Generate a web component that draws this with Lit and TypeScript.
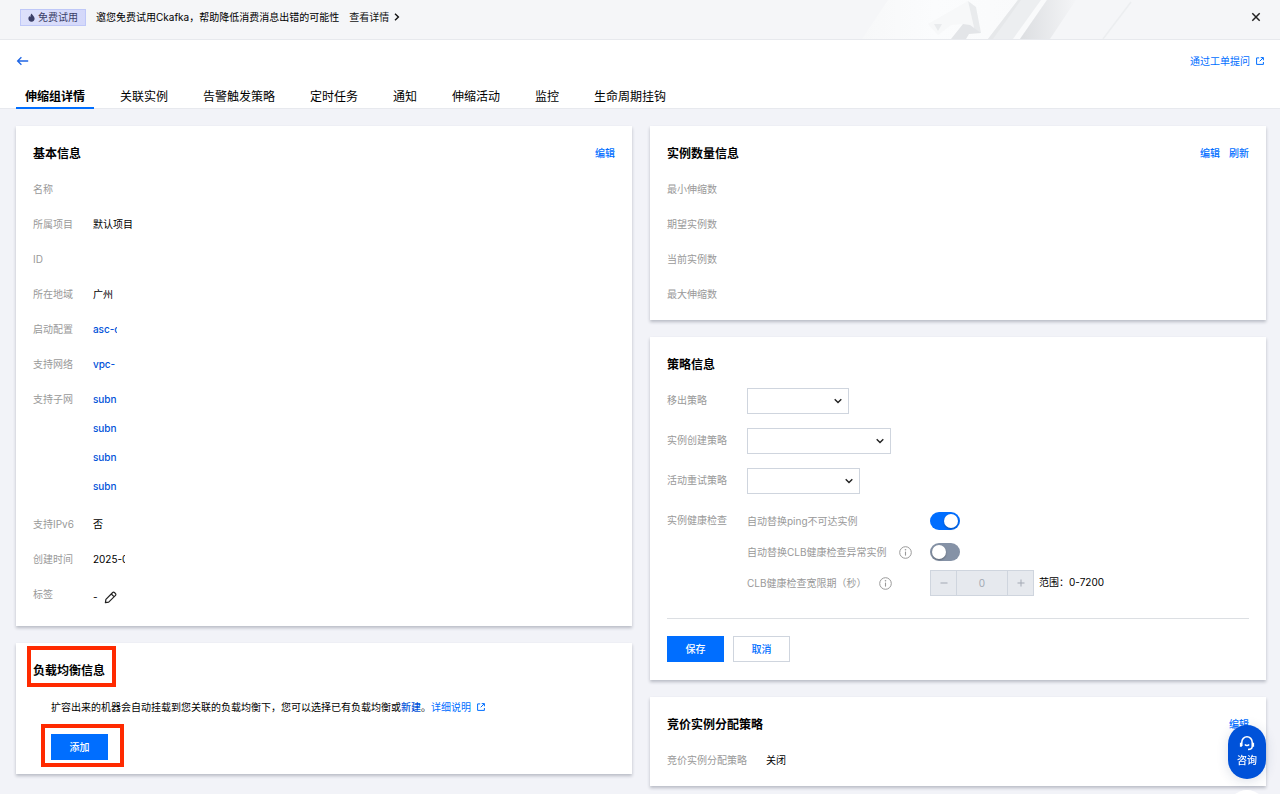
import { LitElement, html, css, svg } from "lit";
import { customElement, property, state } from "lit/decorators.js";

const externalIcon = html`<svg class="ext" viewBox="0 0 8 8" aria-hidden="true">
  <path d="M3.2 .9H.6v6.5h6.8V5M4.7 .6h2.7v2.7M7.2 .8L3.7 4.3" fill="none" stroke="currentColor" stroke-width="1"/>
</svg>`;

const infoIcon = html`<svg class="info" viewBox="0 0 13 13" aria-hidden="true">
  <circle cx="6.5" cy="6.5" r="5.8" fill="none" stroke="currentColor" stroke-width="1"/>
  <path d="M6.5 5.6v4" stroke="currentColor" stroke-width="1.1"/>
  <circle cx="6.5" cy="3.8" r=".8" fill="currentColor"/>
</svg>`;

const base = css`
  * { box-sizing: border-box; }
  button, input, select { font: inherit; margin: 0; }
  button { cursor: pointer; }
  a { color: #006eff; text-decoration: none; }
  .ext { width: 8px; height: 8px; }
`;

@customElement("info-card")
class InfoCard extends LitElement {
  @property() heading = "";
  @property({ type: Boolean }) marked = false;

  static styles = [base, css`
    :host {
      display: block;
      background: #fff;
      padding: 18px 17px 17px;
      box-shadow: 0 2px 3px rgba(54, 58, 80, .3);
    }
    .head { display: flex; justify-content: space-between; align-items: flex-start; margin-bottom: 16px; }
    h2 { position: relative; margin: 0; font-size: 12px; font-weight: 700; line-height: 20px; }
    .mark { position: absolute; inset: -15px -11px -6px -6px; border: 4px solid #ff2a00; }
  `];

  render() {
    return html`
      <div class="head">
        <h2>${this.heading}${this.marked ? html`<span class="mark"></span>` : ""}</h2>
        <slot name="actions"></slot>
      </div>
      <slot></slot>`;
  }
}

@customElement("app-root")
class AppRoot extends LitElement {
  @state() private activeTab = 0;

  private tabs = ["伸缩组详情", "关联实例", "告警触发策略", "定时任务", "通知", "伸缩活动", "监控", "生命周期挂钩"];
  private subnets = ["subn", "subn", "subn", "subn"];
  private counts = ["最小伸缩数", "期望实例数", "当前实例数", "最大伸缩数"];
  private policies = [
    { id: "remove", label: "移出策略", size: "small" },
    { id: "create", label: "实例创建策略", size: "large" },
    { id: "retry", label: "活动重试策略", size: "medium" },
  ];

  static styles = [base, css`
    :host {
      display: block;
      min-height: 100vh;
      background: #f2f3f8;
      color: #000;
      font-family: Inter, "Noto Sans CJK SC", sans-serif;
      font-size: 10px;
      line-height: 18px;
    }

    .banner {
      position: relative;
      display: flex;
      align-items: center;
      height: 40px;
      padding: 0 19px 5px 20px;
      background: #f5f6f8;
      border-bottom: 1px solid #e7e9ed;
    }
    .banner-art { position: absolute; right: 140px; top: 0; width: 280px; height: 39px; }
    .tag {
      display: flex;
      align-items: center;
      gap: 3px;
      height: 17px;
      padding: 0 7px;
      margin-right: 10px;
      background: linear-gradient(90deg, #dde1fb, #d4d8fa);
      border: 1px solid #bfc8f8;
      color: #3c4068;
    }
    .tag svg { width: 7px; height: 9px; }
    .banner a { display: flex; align-items: center; gap: 5px; margin-left: 10px; color: #111; }
    .banner a svg { width: 6px; height: 8px; }
    .close { margin-left: auto; display: flex; padding: 0; border: 0; background: none; z-index: 1; }
    .close svg { width: 10px; height: 10px; }

    .header { background: #fff; padding: 12px 16px 0; border-bottom: 1px solid #e7e9ee; }
    .header-top { display: flex; justify-content: space-between; align-items: center; }
    .back { display: flex; padding: 0; border: 0; background: none; color: #1f66e5; }
    .back svg { width: 13px; height: 10px; }
    .header-top a, .ext-link { display: inline-flex; align-items: center; gap: 6px; }
    .tabs { display: flex; gap: 17px; margin: 16px 0 -1px; }
    .tab {
      padding: 0 9px;
      border: 0;
      border-bottom: 2px solid transparent;
      background: none;
      color: #000;
      font-size: 12px;
      line-height: 21px;
    }
    .tab.active { font-weight: 700; border-color: #006eff; }

    .content {
      display: grid;
      grid-template-columns: 1fr 1fr;
      gap: 18px;
      align-items: start;
      padding: 17px 14px 8px 16px;
    }
    .column { display: flex; flex-direction: column; gap: 17px; }
    .actions { display: flex; gap: 9px; font-weight: 500; }

    .list { display: grid; grid-template-columns: auto 1fr; gap: 17px 19px; margin: 0; }
    .list dt { color: #999; }
    .list dd { margin: 0; }
    .list a { font-weight: 500; color: #0052d9; }
    .clip { display: block; overflow: hidden; white-space: nowrap; width: 24px; }
    .clip.date { width: 32px; }
    .subnets { display: flex; flex-direction: column; gap: 11px; padding-bottom: 3px; }
    .list .tags { display: flex; align-items: center; gap: 6px; height: 24px; }
    .edit { display: flex; padding: 0; border: 0; background: none; color: #222; }
    .edit svg { width: 13px; height: 13px; }

    .balance { padding-bottom: 14px; }
    .desc { margin: 0 0 17px; padding: 0 18px; line-height: 20px; }
    .desc .new { color: #0052d9; font-weight: 500; }
    .add { position: relative; display: inline-flex; margin-left: 18px; vertical-align: top; }
    .add .mark { position: absolute; inset: -10px -16px -7px -10px; border: 4px solid #ff2a00; pointer-events: none; }

    .btn {
      width: 57px;
      height: 26px;
      padding: 0;
      border: 1px solid #006eff;
      background: #006eff;
      color: #fff;
      font-weight: 500;
    }
    .btn.plain { border-color: #cfd5de; background: #fff; color: #006eff; }

    .policy { padding-bottom: 18px; }
    .form { display: flex; flex-direction: column; gap: 14px; margin-top: -3px; }
    .field { display: grid; grid-template-columns: 62px 1fr; gap: 18px; line-height: 25px; color: #999; white-space: nowrap; }
    .select { position: relative; display: flex; }
    .select.small { width: 102px; }
    .select.medium { width: 113px; }
    .select.large { width: 144px; }
    .select select {
      width: 100%;
      height: 26px;
      appearance: none;
      border: 1px solid #cfd5de;
      border-radius: 0;
      background: #fff;
    }
    .select svg { position: absolute; right: 7px; top: 9px; width: 8px; height: 8px; pointer-events: none; }
    .checks { display: grid; grid-template-columns: 165px 1fr; grid-auto-rows: 26px; gap: 5px 18px; align-items: center; }
    .check-label { display: flex; align-items: center; gap: 12px; }
    .info { width: 13px; height: 13px; flex: none; }
    .switch {
      appearance: none;
      display: block;
      width: 30px;
      height: 18px;
      padding: 2px;
      border-radius: 9px;
      background: #8592a6;
    }
    .switch::before {
      content: "";
      display: block;
      width: 14px;
      height: 14px;
      border-radius: 50%;
      background: #fff;
      box-shadow: 0 1px 2px rgba(0, 0, 0, .3);
    }
    .switch:checked { background: #006eff; }
    .switch:checked::before { margin-left: auto; }
    .stepper-row { display: flex; gap: 5px; color: #000; }
    .stepper { display: flex; width: 104px; height: 26px; border: 1px solid #cfd5de; background: #e6e9ee; }
    .stepper button { width: 25px; padding: 0; border: 0; background: none; display: grid; place-items: center; color: #a3a9b4; }
    .stepper button svg { width: 8px; height: 8px; }
    .stepper input {
      flex: 1;
      min-width: 0;
      padding: 0;
      border: 0;
      border-left: 1px solid #cfd5de;
      border-right: 1px solid #cfd5de;
      border-radius: 0;
      background: none;
      color: #a3a9b4;
      text-align: center;
    }
    .rule { margin: 22px 0 17px; border: 0; border-top: 1px solid #dcdfe3; }
    .buttons { display: flex; gap: 9px; }

    .consult {
      position: fixed;
      right: 14px;
      bottom: 15px;
      display: flex;
      flex-direction: column;
      align-items: center;
      width: 38px;
      height: 54px;
      padding: 10px 0 0;
      border: 0;
      border-radius: 19px;
      background: #0052d9;
      color: #fff;
      font-weight: 500;
      line-height: 18px;
      box-shadow: 0 2px 12px rgba(40, 60, 110, .16);
    }
    .consult svg { width: 16px; height: 16px; }
    .more {
      position: fixed;
      right: 14px;
      bottom: -34px;
      width: 38px;
      height: 38px;
      padding: 0;
      border: 0;
      border-radius: 50%;
      background: #fff;
    }
  `];

  private renderBanner() {
    return html`
      <div class="banner">
        <svg class="banner-art" viewBox="0 0 280 39" preserveAspectRatio="none" aria-hidden="true">
          <defs>
            <linearGradient id="fade" x1="0" x2="1"><stop offset="0" stop-color="#f7f8f9"/><stop offset=".4" stop-color="#fbfcfd"/><stop offset="1" stop-color="#f9fafb"/></linearGradient>
            <linearGradient id="shade" x1="0" x2="1"><stop offset="0" stop-color="#dcdee1"/><stop offset="1" stop-color="#f4f5f7"/></linearGradient>
          </defs>
          <path d="M2 39L28 0H182L158 39Z" fill="url(#fade)"/>
          <path d="M68 24L108 1 115 32 104 24 91 25 78 35Z" fill="#f7f8f9"/>
          <path d="M108 1L116 7 121 33 115 32Z" fill="#e9ebed"/>
          <path d="M74 24L82 24 78 31Z" fill="#e9ebed"/>
          <path d="M91 39L103 24 110 25 121 33 109 34 106 39Z" fill="#e3e5e8"/>
          <path d="M128 39L158 0H187L160 39Z" fill="#eceef0"/>
          <path d="M128 39L158 0H161L133 39Z" fill="#e6e8ea"/>
          <path d="M153 39L181 0H187L160 39Z" fill="#f9fafb"/>
          <path d="M160 39L187 0H216L190 39Z" fill="url(#shade)"/>
          <path d="M243 39L271 2" stroke="#eceef0" stroke-width="1.5"/>
        </svg>
        <span class="tag">
          <svg viewBox="0 0 7 9" aria-hidden="true"><path d="M3.6 .5C4 2 6.6 3.3 6.6 5.6A3.1 3.1 0 0 1 .4 5.6C.4 4.3 1 3.6 1.5 3 1.8 3.6 2 3.8 2.4 3.9 2.3 2.5 2.8 1.2 3.6 .5Z" fill="currentColor"/></svg>
          免费试用
        </span>
        <span>邀您免费试用Ckafka，帮助降低消费消息出错的可能性</span>
        <a href="#">查看详情
          <svg viewBox="0 0 6 8" aria-hidden="true"><path d="M1 .8L4.4 4 1 7.2" fill="none" stroke="currentColor" stroke-width="1.4"/></svg>
        </a>
        <button class="close" aria-label="关闭">
          <svg viewBox="0 0 10 10"><path d="M1.3 1.3l7.4 7.4M8.7 1.3L1.3 8.7" stroke="#222" stroke-width="1.5"/></svg>
        </button>
      </div>`;
  }

  private renderHeader() {
    return html`
      <header class="header">
        <div class="header-top">
          <button class="back" aria-label="返回">
            <svg viewBox="0 0 13 10"><path d="M12.2 5H1.6M5.4 1.2L1.6 5l3.8 3.8" fill="none" stroke="currentColor" stroke-width="1.3"/></svg>
          </button>
          <a href="#">通过工单提问 ${externalIcon}</a>
        </div>
        <nav class="tabs" role="tablist">
          ${this.tabs.map((t, i) => html`
            <button role="tab" aria-selected=${i === this.activeTab}
              class="tab ${i === this.activeTab ? "active" : ""}"
              @click=${() => (this.activeTab = i)}>${t}</button>`)}
        </nav>
      </header>`;
  }

  private renderStepIcon(plus: boolean) {
    return html`<svg viewBox="0 0 8 8" aria-hidden="true">
      <path d="M.5 4h7" stroke="currentColor"/>${plus ? svg`<path d="M4 .5v7" stroke="currentColor"/>` : ""}
    </svg>`;
  }

  render() {
    return html`
      ${this.renderBanner()}
      ${this.renderHeader()}
      <main class="content">
        <div class="column">
          <info-card heading="基本信息">
            <div class="actions" slot="actions"><a href="#">编辑</a></div>
            <dl class="list">
              <dt>名称</dt><dd></dd>
              <dt>所属项目</dt><dd>默认项目</dd>
              <dt>ID</dt><dd></dd>
              <dt>所在地域</dt><dd>广州</dd>
              <dt>启动配置</dt><dd><a class="clip" href="#">asc-c</a></dd>
              <dt>支持网络</dt><dd><a class="clip" href="#">vpc-</a></dd>
              <dt>支持子网</dt><dd class="subnets">${this.subnets.map((s) => html`<a class="clip" href="#">${s}</a>`)}</dd>
              <dt>支持IPv6</dt><dd>否</dd>
              <dt>创建时间</dt><dd><span class="clip date">2025-0</span></dd>
              <dt>标签</dt>
              <dd class="tags">-
                <button class="edit" aria-label="编辑标签">
                  <svg viewBox="0 0 13 13"><path d="M1.4 11.6l.5-3.3 6.8-6.8a1.2 1.2 0 0 1 1.7 0l1.1 1.1a1.2 1.2 0 0 1 0 1.7l-6.8 6.8zM7.3 3l2.7 2.7" fill="none" stroke="currentColor" stroke-width="1.2" stroke-linejoin="round"/></svg>
                </button>
              </dd>
            </dl>
          </info-card>

          <info-card class="balance" heading="负载均衡信息" marked>
            <p class="desc">扩容出来的机器会自动挂载到您关联的负载均衡下，您可以选择已有负载均衡或<a class="new" href="#">新建</a>。<a class="ext-link" href="#">详细说明 ${externalIcon}</a></p>
            <div class="add"><button class="btn">添加</button><span class="mark"></span></div>
          </info-card>
        </div>

        <div class="column">
          <info-card heading="实例数量信息">
            <div class="actions" slot="actions"><a href="#">编辑</a><a href="#">刷新</a></div>
            <dl class="list">${this.counts.map((c) => html`<dt>${c}</dt><dd></dd>`)}</dl>
          </info-card>

          <info-card class="policy" heading="策略信息">
            <div class="form">
              ${this.policies.map((p) => html`
                <div class="field">
                  <label for=${p.id}>${p.label}</label>
                  <div class="select ${p.size}">
                    <select id=${p.id}><option></option></select>
                    <svg viewBox="0 0 8 8" aria-hidden="true"><path d="M.7 2.2L4 5.5l3.3-3.3" fill="none" stroke="#222" stroke-width="1.4"/></svg>
                  </div>
                </div>`)}
              <div class="field">
                <span>实例健康检查</span>
                <div class="checks">
                  <label class="check-label" for="ping">自动替换ping不可达实例</label>
                  <input class="switch" id="ping" type="checkbox" role="switch" checked>
                  <label class="check-label" for="clb">自动替换CLB健康检查异常实例 ${infoIcon}</label>
                  <input class="switch" id="clb" type="checkbox" role="switch">
                  <label class="check-label" for="grace">CLB健康检查宽限期（秒） ${infoIcon}</label>
                  <div class="stepper-row">
                    <div class="stepper">
                      <button disabled aria-label="减少">${this.renderStepIcon(false)}</button>
                      <input id="grace" type="text" value="0" disabled>
                      <button disabled aria-label="增加">${this.renderStepIcon(true)}</button>
                    </div>
                    <span>范围：0-7200</span>
                  </div>
                </div>
              </div>
            </div>
            <hr class="rule">
            <div class="buttons">
              <button class="btn">保存</button>
              <button class="btn plain">取消</button>
            </div>
          </info-card>

          <info-card heading="竞价实例分配策略">
            <div class="actions" slot="actions"><a href="#">编辑</a></div>
            <dl class="list"><dt>竞价实例分配策略</dt><dd>关闭</dd></dl>
          </info-card>
        </div>
      </main>

      <button class="consult">
        <svg viewBox="0 0 16 16" aria-hidden="true">
          <path d="M2.8 11V7.2a5.2 5.4 0 0 1 10.4 0v4.3c0 2-1.5 3-4.2 3" fill="none" stroke="currentColor" stroke-width="1.5"/>
          <path d="M1.9 7.8v4M14.1 7.8v4" stroke="currentColor" stroke-width="2"/>
          <path d="M5.8 9.5c1.2 1.3 3.2 1.3 4.4 0" fill="none" stroke="currentColor" stroke-width="1.3"/>
        </svg>
        咨询
      </button>
      <button class="more" aria-label="更多"></button>`;
  }
}
